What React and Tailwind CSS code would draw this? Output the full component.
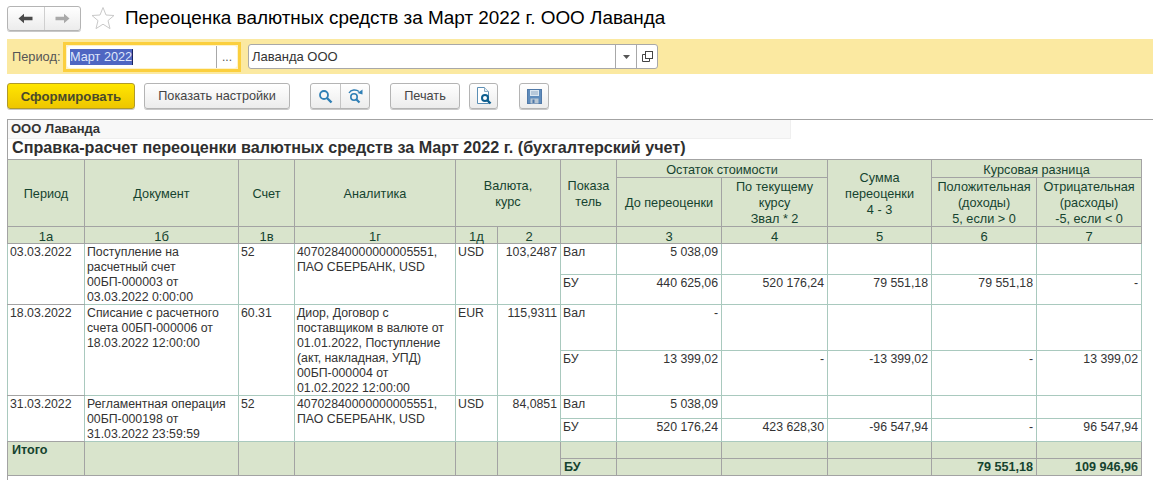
const F = "font-['Liberation_Sans',Arial,sans-serif]";

const Back = () => (
  <svg width="15" height="11" viewBox="0 0 15 11"><path d="M0.5 5.5 L6 0.8 V3.8 H14.5 V7.2 H6 V10.2 Z" fill="#4a4a4a" /></svg>
);
const Fwd = () => (
  <svg width="15" height="11" viewBox="0 0 15 11"><path d="M14.5 5.5 L9 0.8 V3.8 H0.5 V7.2 H9 V10.2 Z" fill="#a9a9a9" /></svg>
);
const Star = () => (
  <svg width="24" height="24" viewBox="0 0 24 24"><path d="M12 1.5 L15 9 L23 9.5 L17 14.6 L19 22.6 L12 18.2 L5 22.6 L7 14.6 L1 9.5 L9 9 Z" fill="#fff" stroke="#c9c9c9" strokeWidth="1" /></svg>
);
const Search = () => (
  <svg width="15" height="15" viewBox="0 0 15 15"><circle cx="6" cy="6" r="4" fill="none" stroke="#2f7fb5" strokeWidth="1.8" /><path d="M9 9 L13.5 13.5" stroke="#2f7fb5" strokeWidth="2.4" /></svg>
);
const SearchNext = () => (
  <svg width="17" height="16" viewBox="0 0 17 16"><circle cx="7" cy="9" r="3.2" fill="none" stroke="#2f7fb5" strokeWidth="1.6" /><path d="M9.5 11.5 L12.5 14.5" stroke="#2f7fb5" strokeWidth="2.2" /><path d="M2 5 C4 1.5 9 1 12 3.5" fill="none" stroke="#2f7fb5" strokeWidth="1.4" /><path d="M15.5 1.5 L15.5 6.5 L10.5 5 Z" fill="#2f7fb5" /></svg>
);
const Preview = () => (
  <svg width="16" height="18" viewBox="0 0 16 18"><path d="M1.5 0.5 H8.5 L12.5 4.5 V16.5 H1.5 Z" fill="#fff" stroke="#5b8fb5" /><path d="M8.5 0.5 V4.5 H12.5" fill="#e4eef5" stroke="#8aa9c0" /><circle cx="9" cy="11" r="3" fill="#fff" stroke="#0f5f8f" strokeWidth="2" /><path d="M11 13 L14.5 16.5" stroke="#0f5f8f" strokeWidth="2.4" /></svg>
);
const Save = () => (
  <svg width="15" height="15" viewBox="0 0 15 15"><rect x="0.5" y="0.5" width="14" height="14" fill="#5f8cbc" stroke="#5079a8" /><rect x="3" y="1" width="9" height="6" fill="#dce7f1" /><rect x="4" y="2.5" width="7" height="1" fill="#8fa9c4" /><rect x="4" y="4.5" width="7" height="1" fill="#8fa9c4" /><rect x="3.5" y="9.5" width="8" height="5" fill="#b9c7d4" /><rect x="5.5" y="10.5" width="2" height="3.5" fill="#5079a8" /></svg>
);

const btn = "flex items-center justify-center h-[26px] rounded-[3px] border border-[#b4b4b4] bg-gradient-to-b from-white to-[#ececec] shadow-[0_1px_0_#c8c8c8] text-[12.7px] text-[#444]";

const H = "border border-[#a3a3a3] bg-[#d9e4cc] text-[#15432f] font-normal text-center align-middle text-[12.7px] leading-[16px] p-0";
const N = "border border-[#a3a3a3] bg-[#d9e4cc] text-[#15432f] font-normal text-center align-middle text-[13px] leading-[15px] p-0";
const D = "border border-[#a9c9be] align-top text-[12.3px] leading-[15px] text-[#333] pl-[2px] pr-[3px] pt-0";
const R = D + " text-right";
const T = "border border-[#a3a3a3] bg-[#d9e4cc] text-[#15432f] font-bold text-right align-middle text-[12.6px] leading-[15px] px-[3px] p-0";

const widths = [77, 154, 56, 161, 42, 63, 56, 105, 106, 104, 105, 105];

const rows = [
  {
    date: "03.03.2022",
    doc: ["Поступление на", "расчетный счет", "00БП-000003 от", "03.03.2022 0:00:00"],
    acc: "52",
    an: ["40702840000000005551,", "ПАО СБЕРБАНК, USD"],
    cur: "USD",
    rate: "103,2487",
    h1: "h-[31px]",
    h2: "h-[30px]",
    v: ["5 038,09", "", "", "", ""],
    b: ["440 625,06", "520 176,24", "79 551,18", "79 551,18", "-"],
  },
  {
    date: "18.03.2022",
    doc: ["Списание с расчетного", "счета 00БП-000006 от", "18.03.2022 12:00:00"],
    acc: "60.31",
    an: ["Диор, Договор с", "поставщиком в валюте от", "01.01.2022, Поступление", "(акт, накладная, УПД)", "00БП-000004 от", "01.02.2022 12:00:00"],
    cur: "EUR",
    rate: "115,9311",
    h1: "h-[46px]",
    h2: "h-[45px]",
    v: ["-", "", "", "", ""],
    b: ["13 399,02", "-", "-13 399,02", "-", "13 399,02"],
  },
  {
    date: "31.03.2022",
    doc: ["Регламентная операция", "00БП-000198 от", "31.03.2022 23:59:59"],
    acc: "52",
    an: ["40702840000000005551,", "ПАО СБЕРБАНК, USD"],
    cur: "USD",
    rate: "84,0851",
    h1: "h-[23px]",
    h2: "h-[23px]",
    v: ["5 038,09", "", "", "", ""],
    b: ["520 176,24", "423 628,30", "-96 547,94", "-", "96 547,94"],
  },
];

// Moves cell text down one pixel without changing the height the cell asks for.
const S = ({ children }) => <div className="mt-px -mb-px">{children}</div>;
const Lines = ({ items }) => <S>{items.map((t, i) => <div key={i} className="whitespace-nowrap">{t}</div>)}</S>;

export default function App() {
  return (
    <div className={`${F} w-[1153px] h-[480px] overflow-hidden bg-white flex flex-col`}>
      <div className="flex items-center h-[39px] pl-[7px] pb-[3px]">
        <div className="flex h-[25px] w-[74px] rounded-[3px] border border-[#b4b4b4] bg-gradient-to-b from-white to-[#ececec] shadow-[0_1px_0_#c8c8c8]">
          <div className="flex-1 flex items-center justify-center border-r border-[#cfcfcf]"><Back /></div>
          <div className="flex-1 flex items-center justify-center"><Fwd /></div>
        </div>
        <div className="ml-[10px]"><Star /></div>
        <div className="ml-[10px] text-[18.9px] text-black whitespace-nowrap">Переоценка валютных средств за Март 2022 г. ООО Лаванда</div>
      </div>

      <div className="ml-[7px] h-[35px] bg-[#fbe9a1] flex items-center">
        <span className="ml-[5px] text-[12.8px] text-[#555] w-[51px] whitespace-nowrap">Период:</span>
        <div className="h-[30px] w-[178px] border-[3px] border-[#fbcf3e] bg-[#fdf3cd] p-px">
          <div className="flex h-full rounded-[3px] bg-white">
            <div className="flex-1 flex items-center pl-[3px] text-[12.7px] text-[#dfe6fb]">
              <span className="bg-[#4f66c2] leading-[16px] border-r border-[#1a2560]">Март 2022</span>
            </div>
            <div className="w-[21px] border-l border-[#a8a8a8] flex items-center justify-center text-[12px] text-[#555]">...</div>
          </div>
        </div>
        <div className="ml-[7px] flex h-[25px] w-[410px] rounded-[3px] border border-[#a8a8a8] bg-white">
          <div className="flex-1 flex items-center pl-[3px] text-[13px] text-[#333]">Лаванда ООО</div>
          <div className="w-[21px] border-l border-[#a8a8a8] flex items-center justify-center">
            <svg width="7" height="4" viewBox="0 0 7 4"><path d="M0 0 H7 L3.5 4 Z" fill="#555" /></svg>
          </div>
          <div className="w-[21px] border-l border-[#a8a8a8] flex items-center justify-center">
            <svg width="11" height="11" viewBox="0 0 11 11" fill="none" stroke="#444"><rect x="3.5" y="0.5" width="7" height="7" /><path d="M3.5 3.5 H0.5 V10.5 H7.5 V7.5" /></svg>
          </div>
        </div>
      </div>

      <div className="flex items-start pl-[7px] pt-[9px] h-[45px]">
        <div className="flex items-center justify-center pt-px h-[26px] w-[128px] rounded-[3px] border border-[#b09a2a] bg-gradient-to-b from-[#ffe600] to-[#eec600] shadow-[0_1px_0_#c8c8c8] text-[13.2px] font-bold text-[#4a4a2a]">Сформировать</div>
        <div className={`${btn} pt-px w-[146px] ml-[9px]`}>Показать настройки</div>
        <div className={`${btn} w-[60px] ml-[20px]`}>
          <div className="w-[30px] h-full flex items-center justify-center border-r border-[#c4c4c4]"><Search /></div>
          <div className="flex-1 h-full flex items-center justify-center"><SearchNext /></div>
        </div>
        <div className={`${btn} pt-px w-[70px] ml-[20px]`}>Печать</div>
        <div className={`${btn} w-[29px] ml-[9px]`}><Preview /></div>
        <div className={`${btn} w-[30px] ml-[21px]`}><Save /></div>
      </div>

      <div className="ml-[7px] flex-1 border-t border-l border-[#a3a3a3] flex flex-col min-h-0">
        <div className="flex-none h-[19px] w-[783px] bg-[#f8f8f8] border-r border-b border-[#efefef] pl-[3px] text-[13px] font-bold leading-[17px] text-[#333]">ООО Лаванда</div>
        <div className="flex-none h-[20px] pl-[4px] text-[16.15px] font-bold leading-[17px] text-[#2f2f2f] whitespace-nowrap">Справка-расчет переоценки валютных средств за Март 2022 г. (бухгалтерский учет)</div>
        <table className="table-fixed w-[1134px] -ml-[1px] flex-none">
          <colgroup>
            {widths.map((w, i) => <col key={i} style={{ width: w }} />)}
          </colgroup>
          <thead>
            <tr className="h-[18px]">
              <th rowSpan={2} className={H}><S>Период</S></th>
              <th rowSpan={2} className={H}><S>Документ</S></th>
              <th rowSpan={2} className={H}><S>Счет</S></th>
              <th rowSpan={2} className={H}><S>Аналитика</S></th>
              <th rowSpan={2} colSpan={2} className={H}><S>Валюта,<br />курс</S></th>
              <th rowSpan={2} className={H}><S>Показа<br />тель</S></th>
              <th colSpan={2} className={H}><S>Остаток стоимости</S></th>
              <th rowSpan={2} className={H}><S>Сумма<br />переоценки<br />4 - 3</S></th>
              <th colSpan={2} className={H}><S>Курсовая разница</S></th>
            </tr>
            <tr className="h-[48px]">
              <th className={H}><S>До переоценки</S></th>
              <th className={H}><S>По текущему<br />курсу<br />Звал * 2</S></th>
              <th className={H}><S>Положительная<br />(доходы)<br />5, если &gt; 0</S></th>
              <th className={H}><S>Отрицательная<br />(расходы)<br />-5, если &lt; 0</S></th>
            </tr>
            <tr className="h-[17px]">
              {["1а", "1б", "1в", "1г", "1д", "2", "", "3", "4", "5", "6", "7"].map((t, i) => (
                <th key={i} className={N}><S>{t}</S></th>
              ))}
            </tr>
          </thead>
          <tbody>
            {rows.map((r) => [
              <tr key={r.date + "a"} className={r.h1}>
                <td rowSpan={2} className={D + " border-b-[#a3a3a3]"}><S>{r.date}</S></td>
                <td rowSpan={2} className={D}><Lines items={r.doc} /></td>
                <td rowSpan={2} className={D}><S>{r.acc}</S></td>
                <td rowSpan={2} className={D}><Lines items={r.an} /></td>
                <td rowSpan={2} className={D}><S>{r.cur}</S></td>
                <td rowSpan={2} className={R}><S>{r.rate}</S></td>
                <td className={D}><S>Вал</S></td>
                {r.v.map((t, i) => <td key={i} className={R}><S>{t}</S></td>)}
              </tr>,
              <tr key={r.date + "b"} className={r.h2}>
                <td className={D}><S>БУ</S></td>
                {r.b.map((t, i) => <td key={i} className={R}><S>{t}</S></td>)}
              </tr>,
            ])}
            <tr className="h-[17px]">
              <td rowSpan={2} className={T + " !text-left !align-top !pl-[4px] !pt-[1px]"}>Итого</td>
              <td rowSpan={2} className={T}></td>
              <td rowSpan={2} className={T}></td>
              <td rowSpan={2} className={T}></td>
              <td rowSpan={2} className={T}></td>
              <td rowSpan={2} className={T}></td>
              {[0, 1, 2, 3, 4, 5].map((i) => <td key={i} className={T}></td>)}
            </tr>
            <tr className="h-[17px]">
              <td className={T + " !text-left"}>БУ</td>
              <td className={T}></td>
              <td className={T}></td>
              <td className={T}></td>
              <td className={T}>79 551,18</td>
              <td className={T}>109 946,96</td>
            </tr>
          </tbody>
        </table>
      </div>
    </div>
  );
}
